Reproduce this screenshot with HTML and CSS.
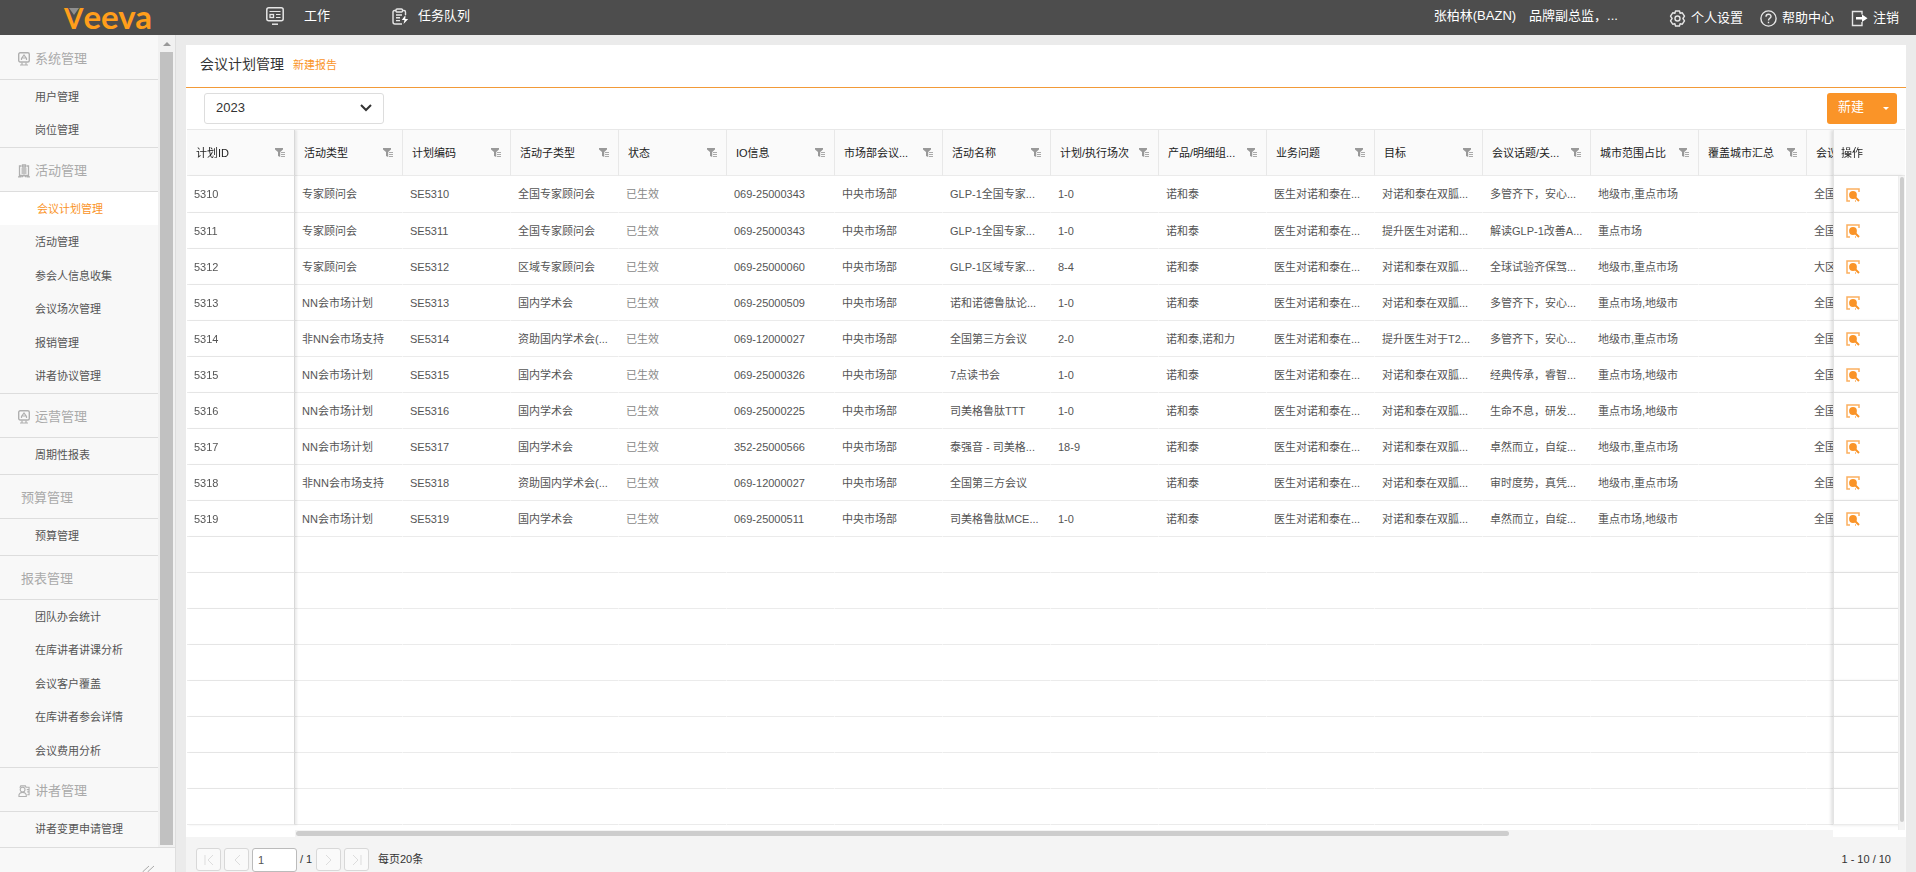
FILE: index.html
```html
<!DOCTYPE html>
<html lang="zh-CN">
<head>
<meta charset="utf-8">
<title>会议计划管理</title>
<link rel="stylesheet" href="styles.css">
</head>
<body>
<svg class="sprite" aria-hidden="true">
  <symbol id="filter" viewBox="0 0 10 10"><path fill="#999" d="M0 0h8v1.5L5.2 4v5L3 8V4L0 1.5z"/><path stroke="#aaa" d="M6 4.5h4M6 6.5h4M6 8.5h4"/></symbol>
  <symbol id="view" viewBox="0 0 14 14"><path fill="none" stroke="#fbb060" stroke-width="1.5" d="M4 13H1V1h12v3M9 13h1"/><circle cx="7" cy="7" r="3.900" fill="#fa9428"/><path stroke="#fa9428" stroke-width="2" d="M9 9l4 4"/></symbol>
  <symbol id="monitor" viewBox="0 0 12 14"><rect x=".7" y=".7" width="10.6" height="9.300" rx="1.500" fill="none" stroke="#b0b0b0" stroke-width="1.400"/><path fill="none" stroke="#b0b0b0" stroke-width="1.200" d="M3.500 8V6.500L6 3l2.500 3.500V8M4 6h4M4 10.500v2M8 10.500v2M2 13h8"/></symbol>
  <symbol id="clip" viewBox="0 0 12 14"><path fill="none" stroke="#b0b0b0" stroke-width="1.300" d="M3.500 2h-2v9.500h9V2h-2M0 12.800h3.500M8.500 12.800H12M4 13l2-2 2 2M4.500 1h3v2h-3zM3.500 5h5M3.500 7h5M3.500 9h5"/></symbol>
  <symbol id="people" viewBox="0 0 13 14"><g fill="none" stroke="#b0b0b0" stroke-width="1.200"><circle cx="5" cy="5.500" r="2.600"/><path d="M1 13c-1-6 9-6 8 0zM2 3.500L3 1.500h5L9 3.500M9 3h3v8h-2M9.500 5.500H12M10 8h2"/></g></symbol>
</svg>
<div class="app">
  <header class="topbar">
    <a class="logo" href="#"><span class="logo-v">V<svg viewBox="0 0 10 7" class="logo-mark" aria-hidden="true"><path fill="#8f8f8f" d="M0 0h10L5 7z"/></svg></span>eeva</a>
    <nav class="topnav">
      <a href="#" class="work"><svg width="18" height="18" viewBox="0 0 18 18" fill="none" stroke="#e6e6e6"><rect x=".8" y=".8" width="16.4" height="13" rx="2" stroke-width="1.5"/><path d="M3.5 4.5h11M10 7.5h4.500M10 10.500h4.500" /><rect x="4" y="7.500" width="3.500" height="3" stroke-width="1.300"/><path stroke-width="1.500" d="M6 17.200h6"/></svg>工作</a>
      <a href="#" class="tasks"><svg width="17" height="17" viewBox="0 0 17 17" fill="none" stroke="#e6e6e6" stroke-width="1.400"><path d="M4 2.500H2.500q-1.500 0-1.500 1.500v10q0 2 2 2h7M10.500 2.500H12q1.500 0 1.500 1.500v3"/><rect x="4" y="1" width="6.500" height="3" rx="1"/><path d="M4 7h6M4 9.800h4M4 12.600h4"/><path fill="#fff" stroke="none" d="M13.500 7L9.800 12h2.700l-1 4L16.200 11h-2.900z"/></svg>任务队列</a>
    </nav>
    <div class="who"><span>张柏林(BAZN)</span><span>品牌副总监，...</span></div>
    <nav class="tools">
      <a href="#"><svg width="17" height="17" viewBox="0 0 17 17" fill="none" stroke="#e6e6e6" stroke-width="1.400"><circle cx="8.500" cy="8.500" r="2.500"/><path stroke-linejoin="round" d="M6.500 1h4l.6 2.200 2.200-.4 2.200 3.400-1.600 2.300 1.600 2.300-2.200 3.400-2.200-.4-.6 2.200h-4l-.6-2.200-2.200.4L1.500 10.800l1.600-2.300L1.500 6.200l2.200-3.400 2.200.4z"/></svg>个人设置</a>
      <a href="#"><svg width="17" height="17" viewBox="0 0 17 17" fill="none" stroke="#e6e6e6" stroke-width="1.400"><circle cx="8.500" cy="8.500" r="7.600"/><path d="M6 6.700c0-3.400 5-3.200 5-.3 0 1.800-2.500 1.800-2.500 4M8.500 11.700v1.600"/></svg>帮助中心</a>
      <a href="#"><svg width="17" height="17" viewBox="0 0 17 17" fill="none" stroke="#e6e6e6" stroke-width="1.400"><path d="M11 4.500V1.500H1.500v14H11V12M5 8.300h7" /><path fill="#fff" stroke="none" d="M11 4.500l5.500 3.800L11 12zM5 7h7v2.600H5z"/></svg>注销</a>
    </nav>
  </header>
  <div class="shell">
    <aside class="sidebar">
      <div class="side-scroll">
        <nav class="menu">
          <h2><svg width="12" height="14"><use href="#monitor"/></svg>系统管理</h2>
          <ul><li><a href="#">用户管理</a></li><li><a href="#">岗位管理</a></li></ul>
          <h2><svg width="12" height="14"><use href="#clip"/></svg>活动管理</h2>
          <ul><li><a href="#" class="active">会议计划管理</a></li><li><a href="#">活动管理</a></li><li><a href="#">参会人信息收集</a></li><li><a href="#">会议场次管理</a></li><li><a href="#">报销管理</a></li><li><a href="#">讲者协议管理</a></li></ul>
          <h2><svg width="12" height="14"><use href="#monitor"/></svg>运营管理</h2>
          <ul><li><a href="#">周期性报表</a></li></ul>
          <h2 class="plain">预算管理</h2>
          <ul><li><a href="#">预算管理</a></li></ul>
          <h2 class="plain">报表管理</h2>
          <ul><li><a href="#">团队办会统计</a></li><li><a href="#">在库讲者讲课分析</a></li><li><a href="#">会议客户覆盖</a></li><li><a href="#">在库讲者参会详情</a></li><li><a href="#">会议费用分析</a></li></ul>
          <h2><svg width="12" height="14"><use href="#people"/></svg>讲者管理</h2>
          <ul><li><a href="#">讲者变更申请管理</a></li></ul>
        </nav>
        <div class="side-bar"><span class="arrow"></span><span class="side-thumb"></span></div>
      </div>
      <button class="collapse" aria-label="收起"><svg width="13" height="13" viewBox="0 0 13 13" fill="none" stroke="#aaa"><path d="M7 1L1 6.500l6 6M12 1L6 6.500l6 6"/></svg></button>
    </aside>
    <main class="panel">
      <div class="title"><h1>会议计划管理</h1><a href="#">新建报告</a></div>
      <div class="toolbar">
        <div class="year"><select aria-label="年份"><option>2023</option></select><svg width="12" height="8" viewBox="0 0 12 8" fill="none" stroke="#333" stroke-width="2"><path d="M1 1l5 5 5-5"/></svg></div>
        <button class="create">新建<span class="caret"></span></button>
      </div>
      <div class="grid">
        <div class="table-wrap">
        <table>
          <thead><tr>
            <th><div>计划ID<svg><use href="#filter"/></svg></div></th>
            <th><div>活动类型<svg><use href="#filter"/></svg></div></th>
            <th><div>计划编码<svg><use href="#filter"/></svg></div></th>
            <th><div>活动子类型<svg><use href="#filter"/></svg></div></th>
            <th><div>状态<svg><use href="#filter"/></svg></div></th>
            <th><div>IO信息<svg><use href="#filter"/></svg></div></th>
            <th><div>市场部会议...<svg><use href="#filter"/></svg></div></th>
            <th><div>活动名称<svg><use href="#filter"/></svg></div></th>
            <th><div>计划/执行场次<svg><use href="#filter"/></svg></div></th>
            <th><div>产品/明细组...<svg><use href="#filter"/></svg></div></th>
            <th><div>业务问题<svg><use href="#filter"/></svg></div></th>
            <th><div>目标<svg><use href="#filter"/></svg></div></th>
            <th><div>会议话题/关...<svg><use href="#filter"/></svg></div></th>
            <th><div>城市范围占比<svg><use href="#filter"/></svg></div></th>
            <th><div>覆盖城市汇总<svg><use href="#filter"/></svg></div></th>
            <th><div>会议</div></th>
            <th>操作</th>
          </tr></thead>
          <tbody>
            <tr><td>5310</td><td>专家顾问会</td><td>SE5310</td><td>全国专家顾问会</td><td>已生效</td><td>069-25000343</td><td>中央市场部</td><td>GLP-1全国专家...</td><td>1-0</td><td>诺和泰</td><td>医生对诺和泰在...</td><td>对诺和泰在双胍...</td><td>多管齐下，安心...</td><td>地级市,重点市场</td><td></td><td>全国</td><td><button aria-label="查看"><svg><use href="#view"/></svg></button></td></tr>
            <tr><td>5311</td><td>专家顾问会</td><td>SE5311</td><td>全国专家顾问会</td><td>已生效</td><td>069-25000343</td><td>中央市场部</td><td>GLP-1全国专家...</td><td>1-0</td><td>诺和泰</td><td>医生对诺和泰在...</td><td>提升医生对诺和...</td><td>解读GLP-1改善A...</td><td>重点市场</td><td></td><td>全国</td><td><button aria-label="查看"><svg><use href="#view"/></svg></button></td></tr>
            <tr><td>5312</td><td>专家顾问会</td><td>SE5312</td><td>区域专家顾问会</td><td>已生效</td><td>069-25000060</td><td>中央市场部</td><td>GLP-1区域专家...</td><td>8-4</td><td>诺和泰</td><td>医生对诺和泰在...</td><td>对诺和泰在双胍...</td><td>全球试验齐保驾...</td><td>地级市,重点市场</td><td></td><td>大区</td><td><button aria-label="查看"><svg><use href="#view"/></svg></button></td></tr>
            <tr><td>5313</td><td>NN会市场计划</td><td>SE5313</td><td>国内学术会</td><td>已生效</td><td>069-25000509</td><td>中央市场部</td><td>诺和诺德鲁肽论...</td><td>1-0</td><td>诺和泰</td><td>医生对诺和泰在...</td><td>对诺和泰在双胍...</td><td>多管齐下，安心...</td><td>重点市场,地级市</td><td></td><td>全国</td><td><button aria-label="查看"><svg><use href="#view"/></svg></button></td></tr>
            <tr><td>5314</td><td>非NN会市场支持</td><td>SE5314</td><td>资助国内学术会(...</td><td>已生效</td><td>069-12000027</td><td>中央市场部</td><td>全国第三方会议</td><td>2-0</td><td>诺和泰,诺和力</td><td>医生对诺和泰在...</td><td>提升医生对于T2...</td><td>多管齐下，安心...</td><td>地级市,重点市场</td><td></td><td>全国</td><td><button aria-label="查看"><svg><use href="#view"/></svg></button></td></tr>
            <tr><td>5315</td><td>NN会市场计划</td><td>SE5315</td><td>国内学术会</td><td>已生效</td><td>069-25000326</td><td>中央市场部</td><td>7点读书会</td><td>1-0</td><td>诺和泰</td><td>医生对诺和泰在...</td><td>对诺和泰在双胍...</td><td>经典传承，睿智...</td><td>重点市场,地级市</td><td></td><td>全国</td><td><button aria-label="查看"><svg><use href="#view"/></svg></button></td></tr>
            <tr><td>5316</td><td>NN会市场计划</td><td>SE5316</td><td>国内学术会</td><td>已生效</td><td>069-25000225</td><td>中央市场部</td><td>司美格鲁肽TTT</td><td>1-0</td><td>诺和泰</td><td>医生对诺和泰在...</td><td>对诺和泰在双胍...</td><td>生命不息，研发...</td><td>重点市场,地级市</td><td></td><td>全国</td><td><button aria-label="查看"><svg><use href="#view"/></svg></button></td></tr>
            <tr><td>5317</td><td>NN会市场计划</td><td>SE5317</td><td>国内学术会</td><td>已生效</td><td>352-25000566</td><td>中央市场部</td><td>泰强音 - 司美格...</td><td>18-9</td><td>诺和泰</td><td>医生对诺和泰在...</td><td>对诺和泰在双胍...</td><td>卓然而立，自绽...</td><td>地级市,重点市场</td><td></td><td>全国</td><td><button aria-label="查看"><svg><use href="#view"/></svg></button></td></tr>
            <tr><td>5318</td><td>非NN会市场支持</td><td>SE5318</td><td>资助国内学术会(...</td><td>已生效</td><td>069-12000027</td><td>中央市场部</td><td>全国第三方会议</td><td></td><td>诺和泰</td><td>医生对诺和泰在...</td><td>对诺和泰在双胍...</td><td>审时度势，真凭...</td><td>地级市,重点市场</td><td></td><td>全国</td><td><button aria-label="查看"><svg><use href="#view"/></svg></button></td></tr>
            <tr><td>5319</td><td>NN会市场计划</td><td>SE5319</td><td>国内学术会</td><td>已生效</td><td>069-25000511</td><td>中央市场部</td><td>司美格鲁肽MCE...</td><td>1-0</td><td>诺和泰</td><td>医生对诺和泰在...</td><td>对诺和泰在双胍...</td><td>卓然而立，自绽...</td><td>重点市场,地级市</td><td></td><td>全国</td><td><button aria-label="查看"><svg><use href="#view"/></svg></button></td></tr>
            <tr><td></td><td></td><td></td><td></td><td></td><td></td><td></td><td></td><td></td><td></td><td></td><td></td><td></td><td></td><td></td><td></td><td></td></tr>
            <tr><td></td><td></td><td></td><td></td><td></td><td></td><td></td><td></td><td></td><td></td><td></td><td></td><td></td><td></td><td></td><td></td><td></td></tr>
            <tr><td></td><td></td><td></td><td></td><td></td><td></td><td></td><td></td><td></td><td></td><td></td><td></td><td></td><td></td><td></td><td></td><td></td></tr>
            <tr><td></td><td></td><td></td><td></td><td></td><td></td><td></td><td></td><td></td><td></td><td></td><td></td><td></td><td></td><td></td><td></td><td></td></tr>
            <tr><td></td><td></td><td></td><td></td><td></td><td></td><td></td><td></td><td></td><td></td><td></td><td></td><td></td><td></td><td></td><td></td><td></td></tr>
            <tr><td></td><td></td><td></td><td></td><td></td><td></td><td></td><td></td><td></td><td></td><td></td><td></td><td></td><td></td><td></td><td></td><td></td></tr>
            <tr><td></td><td></td><td></td><td></td><td></td><td></td><td></td><td></td><td></td><td></td><td></td><td></td><td></td><td></td><td></td><td></td><td></td></tr>
            <tr><td></td><td></td><td></td><td></td><td></td><td></td><td></td><td></td><td></td><td></td><td></td><td></td><td></td><td></td><td></td><td></td><td></td></tr>
          </tbody>
        </table>
        </div>
        <div class="v-track"><span></span></div>
      </div>
      <div class="h-scroll"><i class="pin-left"></i><span class="h-track"><b></b></span><i class="pin-right"></i></div>
      <footer class="pager">
        <button disabled aria-label="首页"><svg viewBox="0 0 10 10"><path d="M1 0v10M9 0L4 5l5 5"/></svg></button>
        <button disabled aria-label="上一页"><svg viewBox="0 0 10 10"><path d="M8 0L3 5l5 5"/></svg></button>
        <input type="text" value="1" aria-label="页码"><span class="of">/ 1</span>
        <button disabled aria-label="下一页"><svg viewBox="0 0 10 10"><path d="M2 0l5 5-5 5"/></svg></button>
        <button disabled aria-label="末页"><svg viewBox="0 0 10 10"><path d="M1 0l5 5-5 5M9 0v10"/></svg></button>
        <span class="size">每页20条</span>
        <span class="range">1 - 10 / 10</span>
      </footer>
    </main>
  </div>
</div>
</body>
</html>
```
FILE: styles.css
```css
* { box-sizing: border-box; }
body { margin: 0; background: #ebebeb; color: #333; font: 11px/16px "Liberation Sans", "Noto Sans CJK SC", sans-serif; }
a { color: inherit; text-decoration: none; }
button, input, select { font: inherit; margin: 0; }
button { cursor: pointer; }
h1, h2, ul { margin: 0; padding: 0; font-weight: normal; list-style: none; }
svg { flex: none; }
.sprite { position: absolute; width: 0; height: 0; }
.app { display: flex; flex-direction: column; height: 100vh; overflow: hidden; }

.topbar { display: flex; align-items: center; flex: none; height: 35px; padding: 0 17px 0 64px; background: #4d4d4d; color: #fff; font-size: 13px; white-space: nowrap; }
.topbar a { display: flex; align-items: center; }
.topbar .logo { display: block; width: 202px; color: #ff9e1b; font: bold 33px/33px Lato, sans-serif; }
.logo-v { position: relative; font-size: 28px; }
.logo-mark { position: absolute; left: 5px; top: 7px; width: 10px; height: 7px; }
.topnav { display: flex; flex: 1; padding-bottom: 3px; }
.work { gap: 20px; margin-right: 62px; }
.tasks { gap: 9px; }
.who { display: flex; gap: 13px; padding-bottom: 3px; margin-right: 51px; }
.tools { display: flex; gap: 17px; padding-top: 1px; }
.tools a { gap: 5px; }

.shell { display: flex; flex: 1; min-height: 0; }
.sidebar { display: flex; flex-direction: column; width: 176px; margin-right: 10px; background: #f8f8f8; border-right: 1px solid #dedede; }
.side-scroll { display: flex; flex: 1; min-height: 0; border-bottom: 1px solid #ddd; }
.menu { flex: 1; overflow: hidden; }
.menu h2 { display: flex; align-items: center; gap: 5px; height: 44px; padding: 3px 0 0 18px; color: #aaa; font-size: 13px; border-bottom: 1px solid #ddd; }
.menu h2.plain { padding-left: 21px; }
.menu h2:first-child { height: 45px; }
.menu ul { min-height: 37px; border-bottom: 1px solid #ddd; }
.menu ul:last-child { border-bottom: 0; }
.menu li { height: 33px; }
.menu li:nth-child(even) { height: 34px; }
.menu li a { display: block; height: 100%; padding-left: 35px; line-height: 34px; color: #555; }
.menu li .active { padding-left: 37px; background: #fff; color: #fa9428; }
.side-bar { display: flex; flex-direction: column; align-items: center; width: 17px; padding: 7px 0 2px; background: #f1f1f1; }
.arrow { border: 4px solid transparent; border-top: 0; border-bottom: 4px solid #999; }
.side-thumb { flex: 1; width: 13px; margin-top: 6px; background: #c1c1c1; }
.collapse { display: flex; justify-content: flex-end; height: 24px; padding: 17px 20px 0 0; border: 0; background: none; overflow: hidden; }

.panel { display: flex; flex: 1; flex-direction: column; min-width: 0; margin: 10px 10px 0 0; background: #fff; }
.title { display: flex; align-items: center; gap: 9px; height: 43px; padding: 0 14px 4px; border-bottom: 1px solid #f29a38; }
.title h1 { font-size: 14px; color: #333; }
.title a { padding-top: 2px; color: #fa9428; }
.toolbar { display: flex; align-items: flex-start; justify-content: space-between; height: 41px; padding: 5px 9px 0 18px; }
.year { position: relative; width: 180px; }
.year select { width: 100%; height: 31px; padding: 0 11px 2px; appearance: none; border: 1px solid #ddd; border-radius: 3px; background: #fff; color: #333; font-size: 13px; }
.year svg { position: absolute; right: 12px; top: 11px; pointer-events: none; }
.create { display: flex; align-items: center; justify-content: space-between; width: 70px; height: 31px; padding: 0 8px 4px 11px; border: 0; border-radius: 3px; background: #fa9428; color: #fff; font-size: 13px; }
.caret { margin-top: 4px; border: 3px solid transparent; border-top-color: #fff; border-bottom: 0; }

.grid { position: relative; flex: 1; min-height: 0; margin: 0 1px; border-top: 1px solid #e8e8e8; }
.table-wrap { height: 100%; overflow: hidden; }
table { width: 1800px; table-layout: fixed; border-collapse: separate; border-spacing: 0; }
th, td { overflow: hidden; border-bottom: 1px solid #ebebeb; text-align: left; font-weight: normal; white-space: nowrap; }
th { width: 108px; height: 46px; padding: 0 9px; border-right: 1px solid #e8e8e8; background: #fafafa; color: #222; }
th div { display: flex; align-items: center; justify-content: space-between; }
th svg { width: 10px; height: 10px; }
td { height: 36px; padding: 0 0 0 7px; border-right: 1px solid #fff; background: #fff; color: #555; }
tbody tr:first-child td { height: 37px; }
td:nth-child(5) { color: #888; }
th:first-child, td:first-child { position: sticky; left: 0; z-index: 1; overflow: visible; border-right: 1px solid #d8d8d8; box-shadow: 2px 0 2px rgba(0, 0, 0, .08); }
th:last-child, td:last-child { position: sticky; right: 0; width: 72px; border-right: 0; border-left: 1px solid #e4e4e4; box-shadow: -2px 0 3px rgba(0, 0, 0, .12); }
th:last-child { padding-left: 7px; }
td:last-child { padding-left: 12px; }
td button { display: block; padding: 1px 0 0; border: 0; background: none; }
td svg { display: block; width: 14px; height: 14px; }
.v-track { position: absolute; right: 0; top: 46px; bottom: 0; z-index: 2; width: 7px; padding: 1px 1px 8px; border-left: 1px solid #eee; background: #f4f4f4; }
.v-track span { display: block; height: 100%; border-radius: 3px; background: #cdcdcd; }
.h-scroll { display: flex; flex: none; height: 7px; margin: 0 1px; background: #f4f4f4; }
.pin-left { width: 108px; background: #fff; }
.pin-right { width: 72px; background: #fff; }
.h-track { flex: 1; padding: 1px; }
.h-track b { display: block; width: 79%; height: 5px; border-radius: 3px; background: #cdcdcd; }
.pager { display: flex; flex: none; align-items: flex-start; gap: 3px; height: 35px; padding: 11px 15px 0 10px; background: #f4f4f4; line-height: 23px; }
.pager button { display: flex; align-items: center; justify-content: center; width: 25px; height: 23px; padding: 0; border: 1px solid #d8d8d8; border-radius: 3px; background: #fafafa; }
.pager button svg { width: 10px; height: 10px; fill: none; stroke: #ddd; }
.pager input { width: 45px; height: 24px; padding: 0 5px; border: 1px solid #bbb; border-radius: 3px; background: #fff; color: #555; }
.of { width: 13px; }
.size { margin-left: 6px; }
.range { margin-left: auto; }
```
